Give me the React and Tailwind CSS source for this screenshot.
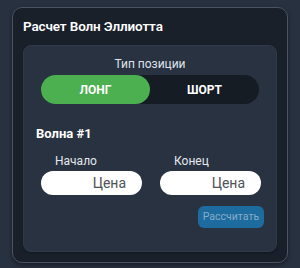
const font = { fontFamily: 'Roboto, "Noto Sans", sans-serif' };

const PriceInput = ({ label }) => (
  <div className="flex flex-col">
    <label className="pl-[14px] text-[12px] leading-[18px] text-[#e6e9ee]">{label}</label>
    <input
      type="text"
      placeholder="Цена"
      className="mt-px h-6 w-[101px] rounded-full bg-white pr-4 text-right text-[14px] text-[#222] outline-none placeholder:text-[#4f5256]"
    />
  </div>
);

export default function App() {
  return (
    <div className="min-h-[268px] w-[300px] bg-[#283140] pt-[7px]" style={font}>
      <div className="mx-3 rounded-[10px] border border-[#4a5463] bg-[#19202a] px-[10px] pb-[10px] pt-[8px] shadow-[0_2px_4px_rgba(0,0,0,0.4)]">
        <h2 className="mb-[9px] text-[13.5px] font-semibold leading-[20px] tracking-[-0.01em] text-white">Расчет Волн Эллиотта</h2>

        <div className="rounded-[8px] border border-[#303b4a] bg-[#283241] px-3 pb-[23px] pt-[8px] shadow-[0_1px_2px_rgba(0,0,0,0.35)]">
          <div className="text-center text-[12px] leading-[20px] text-[#dfe3e8]">Тип позиции</div>

          <div className="mx-[5px] mt-px flex h-[29px] rounded-full bg-[#161c24]">
            <button className="flex-1 rounded-full bg-[#4caf50] text-[12px] font-bold text-white">ЛОНГ</button>
            <button className="flex-1 rounded-full text-[12px] font-bold text-white">ШОРТ</button>
          </div>

          <h3 className="mt-[20px] text-[13px] font-bold leading-[20px] text-white">Волна #1</h3>

          <div className="mt-[8px] flex gap-[18px] pl-[5px]">
            <PriceInput label="Начало" />
            <PriceInput label="Конец" />
          </div>

          <div className="mt-[11px] flex justify-end">
            <button className="h-[22px] w-[66px] rounded-[6px] bg-[#1e6b9f] text-[10.5px] leading-[22px] text-[#86acc8]">Рассчитать</button>
          </div>
        </div>
      </div>
    </div>
  );
}
